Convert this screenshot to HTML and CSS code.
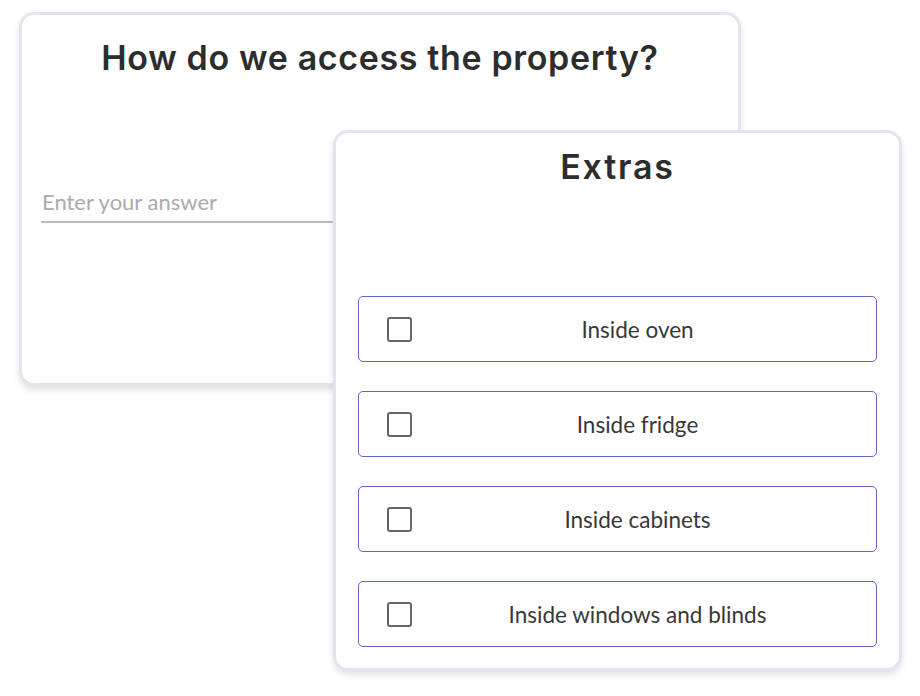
FILE: index.html
```html
<!DOCTYPE html>
<html>
<head>
<meta charset="utf-8">
<link rel="stylesheet" href="styles.css">
</head>
<body>
<div class="stage">
  <section class="card card-question">
    <h1 class="title">How do we access the property?</h1>
    <div class="answer">
      <span class="placeholder">Enter your answer</span>
    </div>
  </section>
  <section class="card card-extras">
    <h2 class="title title-wide">Extras</h2>
    <ul class="options">
      <li class="option"><span class="check"></span><span class="label">Inside oven</span></li>
      <li class="option"><span class="check"></span><span class="label">Inside fridge</span></li>
      <li class="option"><span class="check"></span><span class="label">Inside cabinets</span></li>
      <li class="option"><span class="check"></span><span class="label">Inside windows and blinds</span></li>
    </ul>
  </section>
</div>
</body>
</html>
```
FILE: styles.css
```css
html, body {
  margin: 0;
  padding: 0;
  background: #ffffff;
}
body {
  width: 920px;
  height: 696px;
  overflow: hidden;
  font-family: "Lato", "Noto Sans", sans-serif;
}
.stage {
  display: grid;
  grid-template-columns: 920px;
  grid-template-rows: 696px;
}
.card {
  grid-area: 1 / 1;
  box-sizing: border-box;
  background: #ffffff;
  border: 3px solid #e4e4ee;
  border-radius: 15px;
  box-shadow: 0 4px 6px rgba(60, 60, 80, 0.14);
  align-self: start;
  justify-self: start;
}
.card-question {
  margin: 12px 0 0 19px;
  width: 722px;
  height: 374px;
  padding: 0 19px;
}
.card-extras {
  margin: 130px 0 0 333px;
  width: 569px;
  height: 541px;
  padding: 0 22px;
}
.title {
  margin: 0;
  font-family: "Inter", "Lato", sans-serif;
  font-weight: 600;
  font-size: 34px;
  line-height: 42px;
  color: #2d2d2d;
  text-align: center;
  letter-spacing: 0.65px;
}
.title-wide {
  letter-spacing: 1.8px;
}
.card-question .title {
  margin-top: 22px;
}
.card-extras .title {
  margin-top: 13px;
}
.answer {
  margin-top: 110px;
  border-bottom: 2px solid #bdbdbd;
  height: 34px;
  box-sizing: border-box;
}
.placeholder {
  display: block;
  font-size: 22px;
  line-height: 26px;
  color: #ababab;
  padding-left: 1px;
}
.options {
  list-style: none;
  margin: 108px 0 0 0;
  padding: 0;
  display: flex;
  flex-direction: column;
  gap: 29px;
}
.option {
  box-sizing: border-box;
  height: 66px;
  border: 1.5px solid #5f66c4;
  border-radius: 5px;
  display: flex;
  align-items: center;
  padding: 0 13px 0 28px;
}
.check {
  box-sizing: border-box;
  width: 25px;
  height: 25px;
  border: 2.5px solid #666666;
  border-radius: 3px;
  flex: none;
}
.label {
  flex: 1;
  text-align: center;
  font-size: 22.5px;
  color: #383838;
}
```
